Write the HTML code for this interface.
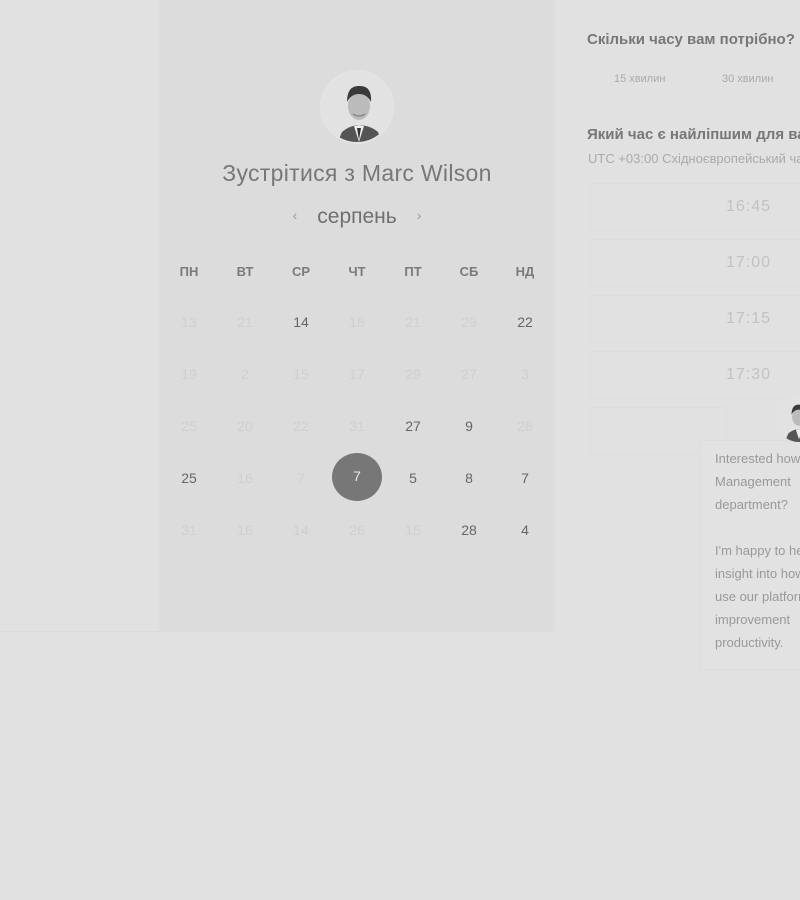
<!DOCTYPE html>
<html><head><meta charset="utf-8">
<style>
*{margin:0;padding:0;box-sizing:border-box}
body{width:800px;height:900px;background:#e1e1e1;position:relative;overflow:hidden;font-family:"Liberation Sans","DejaVu Sans",sans-serif}
.strip{position:absolute;left:0;top:0;width:160px;height:632px;border-bottom:1px solid #dadada}
.card{position:absolute;left:160px;top:0;width:394px;height:630px;background:#dcdcdc;box-shadow:0 1px 2px rgba(0,0,0,.04)}
.av{position:absolute;left:320px;top:70px;width:74px;height:74px;border-radius:50%;background:#e4e4e4;border:2px solid #e3e3e3;overflow:hidden}
.title{position:absolute;left:160px;width:394px;top:160px;text-align:center;font-size:23px;color:#777;letter-spacing:.3px}
.month{position:absolute;left:160px;width:394px;top:205px;text-align:center;font-size:21px;color:#6f6f6f}
.month .a{font-size:14px;color:#999;position:relative;top:-3px;margin:0 20px}
.d{position:absolute;width:50px;margin-left:-25px;text-align:center;font-size:14px;color:#cfcfcf}
.h{font-size:13px;font-weight:bold;color:#7a7a7a}
.k{color:#666}
.sel{position:absolute;left:332px;top:453px;width:50px;height:48px;border-radius:50%;background:#777;color:#e8e8e8;text-align:center;line-height:46px;font-size:14px}
.rt{position:absolute;left:587px;font-weight:bold;font-size:15px;color:#777;white-space:nowrap}
.dur{position:absolute;top:73px;font-size:11px;color:#aaa}
.tz{position:absolute;left:588px;top:151px;font-size:13px;color:#aaa;white-space:nowrap}
.slot{position:absolute;left:590px;width:220px;height:48px;border:1px solid #dddddd;border-radius:3px;line-height:46px;font-size:16px;color:#c2c2c2;padding-left:135px;letter-spacing:1px}
.bub{position:absolute;left:700px;top:440px;width:120px;height:230px;border:1px solid #dddddd;background:#e2e2e2}
.msg{position:absolute;left:715px;top:447px;font-size:13px;line-height:23px;color:#999;white-space:nowrap}
.av2{position:absolute;left:776px;top:396px;width:46px;height:46px;border-radius:50%;background:#e6e6e6;overflow:hidden}
</style></head><body>
<div class="strip"></div>
<div class="card"></div>
<div class="av"><svg width="74" height="74" viewBox="0 0 74 74"><circle cx="37" cy="37" r="37" fill="#e2e2e2"/><path d="M14 74 L20 60 Q30 52 37 54 Q46 52 56 60 L62 74Z" fill="#555"/><path d="M32 54 L37 70 L42 54Z" fill="#eee"/><path d="M35 56 L37 68 L39 56Z" fill="#333"/><ellipse cx="37" cy="34" rx="11" ry="14" fill="#bbb"/><path d="M25 30 Q25 13 38 14 Q50 14 49 30 Q45 22 37 22 Q29 22 25 30Z" fill="#3a3a3a"/><path d="M31 42 Q37 46 43 42" stroke="#888" stroke-width="1.5" fill="none"/></svg></div>
<div class="title">Зустрітися з Marc Wilson</div>
<div class="month"><span class="a">‹</span>серпень<span class="a">›</span></div>

<div class="d h" style="left:189px;top:264px">ПН</div>
<div class="d h" style="left:245px;top:264px">ВТ</div>
<div class="d h" style="left:301px;top:264px">СР</div>
<div class="d h" style="left:357px;top:264px">ЧТ</div>
<div class="d h" style="left:413px;top:264px">ПТ</div>
<div class="d h" style="left:469px;top:264px">СБ</div>
<div class="d h" style="left:525px;top:264px">НД</div>

<div class="d" style="left:189px;top:314px">13</div><div class="d" style="left:245px;top:314px">21</div><div class="d k" style="left:301px;top:314px">14</div><div class="d" style="left:357px;top:314px">18</div><div class="d" style="left:413px;top:314px">21</div><div class="d" style="left:469px;top:314px">29</div><div class="d k" style="left:525px;top:314px">22</div>
<div class="d" style="left:189px;top:366px">19</div><div class="d" style="left:245px;top:366px">2</div><div class="d" style="left:301px;top:366px">15</div><div class="d" style="left:357px;top:366px">17</div><div class="d" style="left:413px;top:366px">29</div><div class="d" style="left:469px;top:366px">27</div><div class="d" style="left:525px;top:366px">3</div>
<div class="d" style="left:189px;top:418px">25</div><div class="d" style="left:245px;top:418px">20</div><div class="d" style="left:301px;top:418px">22</div><div class="d" style="left:357px;top:418px">31</div><div class="d k" style="left:413px;top:418px">27</div><div class="d k" style="left:469px;top:418px">9</div><div class="d" style="left:525px;top:418px">28</div>
<div class="d k" style="left:189px;top:470px">25</div><div class="d" style="left:245px;top:470px">16</div><div class="d" style="left:301px;top:470px">7</div><div class="sel">7</div><div class="d k" style="left:413px;top:470px">5</div><div class="d k" style="left:469px;top:470px">8</div><div class="d k" style="left:525px;top:470px">7</div>
<div class="d" style="left:189px;top:522px">31</div><div class="d" style="left:245px;top:522px">16</div><div class="d" style="left:301px;top:522px">14</div><div class="d" style="left:357px;top:522px">26</div><div class="d" style="left:413px;top:522px">15</div><div class="d k" style="left:469px;top:522px">28</div><div class="d k" style="left:525px;top:522px">4</div>

<div class="rt" style="top:31px">Скільки часу вам потрібно?</div>
<div class="dur" style="left:614px">15 хвилин</div>
<div class="dur" style="left:722px">30 хвилин</div>
<div class="rt" style="top:126px">Який час є найліпшим для вас?</div>
<div class="tz">UTC +03:00 Східноєвропейський час</div>
<div class="slot" style="top:183px">16:45</div>
<div class="slot" style="top:239px">17:00</div>
<div class="slot" style="top:295px">17:15</div>
<div class="slot" style="top:351px">17:30</div>
<div class="slot" style="top:407px;width:110px"></div>
<div class="bub"></div>
<div class="av2"><svg width="46" height="46" viewBox="0 0 74 74"><circle cx="37" cy="37" r="37" fill="#e2e2e2"/><path d="M14 74 L20 60 Q30 52 37 54 Q46 52 56 60 L62 74Z" fill="#555"/><path d="M32 54 L37 70 L42 54Z" fill="#eee"/><ellipse cx="37" cy="34" rx="11" ry="14" fill="#bbb"/><path d="M25 30 Q25 13 38 14 Q50 14 49 30 Q45 22 37 22 Q29 22 25 30Z" fill="#3a3a3a"/></svg></div>
<div class="msg">Interested how<br>Management<br>department?<br><br>I'm happy to he<br>insight into how<br>use our platform<br>improvement<br>productivity.</div>
</body></html>
